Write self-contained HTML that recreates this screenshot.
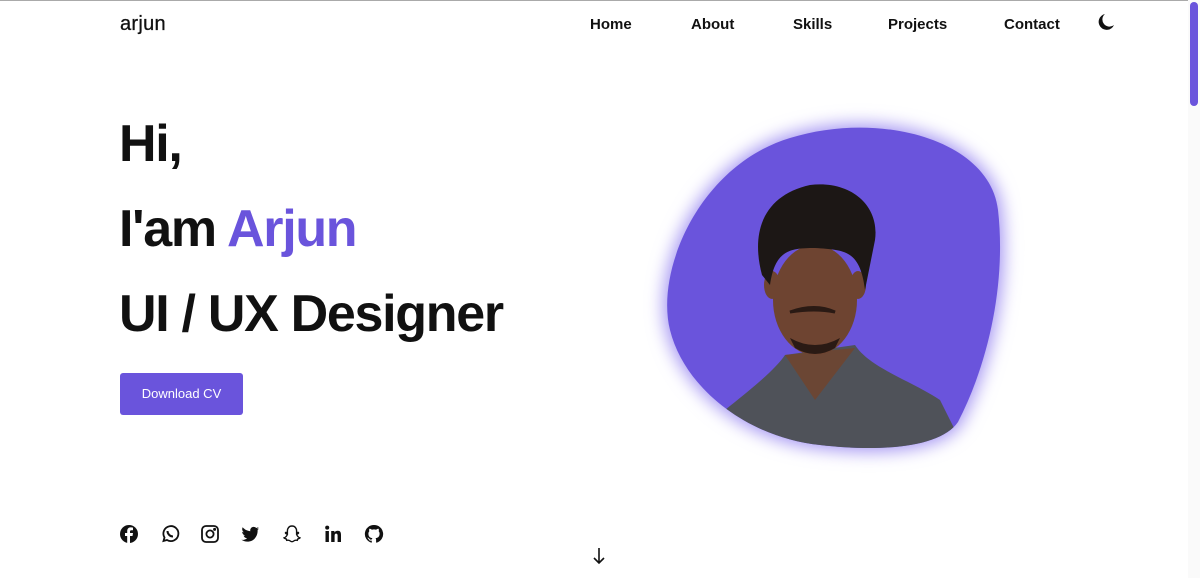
<!DOCTYPE html>
<html><head><meta charset="utf-8"><style>
*{margin:0;padding:0;box-sizing:border-box}
body{width:1200px;height:578px;overflow:hidden;background:#fff;font-family:"Liberation Sans",sans-serif;color:#111;position:relative}
.top{position:absolute;left:0;top:0;width:1200px;height:1px;background:#aaa}
.logo{position:absolute;left:120px;top:13px;font-size:20px;letter-spacing:.3px;-webkit-text-stroke:.3px #111}
.nav a{position:absolute;top:16px;font-size:15px;font-weight:bold;color:#111;text-decoration:none}
h1{position:absolute;left:119px;font-size:52px;font-weight:bold;letter-spacing:-1.3px;white-space:nowrap}
.btn{position:absolute;left:120px;top:373px;width:123px;height:42px;background:#6a54dc;color:#fff;border-radius:3px;font-size:13px;text-align:center;line-height:42px}
.sb{position:absolute;right:0;top:0;width:12px;height:578px;background:#fafafa}
.thumb{position:absolute;right:2px;top:2px;width:8px;height:104px;background:#6a54dc;border-radius:4px}
.soc svg{position:absolute;top:524px;width:20px;height:20px}
</style></head><body>
<div class="top"></div>
<div class="logo">arjun</div>
<div class="nav">
<a style="left:590px">Home</a><a style="left:691px">About</a><a style="left:793px">Skills</a><a style="left:888px">Projects</a><a style="left:1004px">Contact</a>
</div>
<svg style="position:absolute;left:1096px;top:12px" width="20" height="20" viewBox="0 0 20 20"><path d="M9 2A8 8 0 1 0 18 13A7 7 0 0 1 9 2Z" fill="#111"/></svg>
<h1 style="top:114px">Hi,</h1>
<h1 style="top:199px">I'am <span style="color:#6a54dc">Arjun</span></h1>
<h1 style="top:284px">UI / UX Designer</h1>
<div class="btn">Download CV</div>

<svg style="position:absolute;left:640px;top:100px" width="400" height="380" viewBox="0 0 400 380">
<defs><filter id="f" x="-20%" y="-20%" width="140%" height="140%"><feGaussianBlur stdDeviation="8"/></filter>
<clipPath id="c"><path d="M150 38C240 10 350 40 358 110C366 180 350 260 318 322C300 348 240 352 180 345C110 338 45 290 30 230C15 170 60 65 150 38Z"/></clipPath></defs>
<path d="M150 38C240 10 350 40 358 110C366 180 350 260 318 322C300 348 240 352 180 345C110 338 45 290 30 230C15 170 60 65 150 38Z" fill="#9c8bf0" stroke="#b5a9f5" stroke-width="10" filter="url(#f)"/>
<path d="M150 38C240 10 350 40 358 110C366 180 350 260 318 322C300 348 240 352 180 345C110 338 45 290 30 230C15 170 60 65 150 38Z" fill="#6a54dc"/>
<g clip-path="url(#c)">
<path d="M85 310C110 290 135 270 145 255L215 245C230 268 270 280 300 300L320 340L320 380L85 380Z" fill="#4f5259"/>
<path d="M145 255L175 300L215 248Z" fill="#6b4634"/>
<ellipse cx="175" cy="200" rx="42" ry="55" fill="#6e4431"/>
<ellipse cx="132" cy="185" rx="8" ry="14" fill="#6e4431"/>
<ellipse cx="218" cy="185" rx="8" ry="14" fill="#6e4431"/>
<path d="M122 175C110 130 125 95 170 85C210 80 240 105 235 140L225 190C220 150 205 150 175 148C150 148 135 150 130 185Z" fill="#1c1715"/>
<path d="M150 212Q175 203 195 212Q175 208 150 212Z" fill="#2a1a14" stroke="#2a1a14" stroke-width="3"/>
<path d="M150 238Q175 252 200 238L195 248Q175 260 155 248Z" fill="#2a1a14"/>
</g>
</svg>

<div class="soc">
<svg style="left:119px" viewBox="0 0 20 20"><circle cx="10" cy="10" r="9" fill="#111"/><path d="M11 19V12H13.5L14 9H11V7.5C11 6.7 11.3 6.2 12.3 6.2H14V3.6C13.6 3.5 12.7 3.4 11.8 3.4C9.6 3.4 8.2 4.7 8.2 7V9H6V12H8.2V19Z" fill="#fff"/></svg>
<svg style="left:160px" viewBox="0 0 20 20" fill="none" stroke="#111" stroke-width="1.8"><path d="M3.5 17L4.5 13.5A7.5 7.5 0 1 1 7 16Z"/><path d="M7.5 7C7.5 10 10 12.5 13 12.5" stroke-width="2"/></svg>
<svg style="left:200px" viewBox="0 0 20 20" fill="none" stroke="#111" stroke-width="1.8"><rect x="2" y="2" width="16" height="16" rx="4"/><circle cx="10" cy="10" r="3.6"/><circle cx="14.6" cy="5.4" r=".6" fill="#111"/></svg>
<svg style="left:240px" viewBox="0 0 20 20"><path d="M19 4.5C18.3 4.8 17.6 5 16.9 5.1C17.6 4.6 18.2 4 18.5 3.1C17.8 3.5 17 3.8 16.2 4C14.9 2.6 12.7 2.5 11.3 3.8C10.4 4.7 10 6 10.3 7.2C7.3 7 4.6 5.6 2.7 3.3C1.7 5 2.2 7.2 3.9 8.3C3.3 8.3 2.7 8.1 2.2 7.8C2.2 9.6 3.5 11.2 5.2 11.5C4.7 11.7 4.1 11.7 3.6 11.6C4.1 13.1 5.5 14.2 7.1 14.2C5.5 15.5 3.4 16.1 1.4 15.8C3.2 17 5.2 17.6 7.3 17.6C14.6 17.6 18 11.3 17.6 5.9C18.2 5.5 18.7 5 19 4.5Z" fill="#111"/></svg>
<svg style="left:282px" viewBox="0 0 20 20" fill="none" stroke="#111" stroke-width="1.4"><path d="M10 2C13 2 14.6 4.3 14.6 7V8.8L16.2 8.4C16.7 8.6 16.7 9.2 16.2 9.5L14.6 10.3C15.2 12 16.5 13.4 18 13.9C17.6 14.6 16.5 14.6 15.8 14.9L15.3 16.3C14.2 16.1 12.9 16 11.9 16.9C10.6 18 9.4 18 8.1 16.9C7.1 16 5.8 16.1 4.7 16.3L4.2 14.9C3.5 14.6 2.4 14.6 2 13.9C3.5 13.4 4.8 12 5.4 10.3L3.8 9.5C3.3 9.2 3.3 8.6 3.8 8.4L5.4 8.8V7C5.4 4.3 7 2 10 2Z"/></svg>
<svg style="left:323px" viewBox="0 0 20 20" fill="#111"><rect x="2.5" y="7" width="3.4" height="11"/><circle cx="4.2" cy="3.6" r="2"/><path d="M8.2 7H11.4V8.6C12 7.5 13.3 6.8 14.8 6.8C17.3 6.8 18 8.5 18 11V18H14.6V11.8C14.6 10.5 14.3 9.6 13.1 9.6C11.9 9.6 11.6 10.6 11.6 11.8V18H8.2Z"/></svg>
<svg style="left:364px" viewBox="0 0 20 20"><path d="M10 1A9 9 0 0 0 7.2 18.6C7.6 18.7 7.8 18.4 7.8 18.2V16.6C5.3 17.1 4.8 15.5 4.8 15.5C4.4 14.5 3.8 14.2 3.8 14.2C3 13.6 3.9 13.6 3.9 13.6C4.8 13.7 5.3 14.6 5.3 14.6C6.1 16 7.4 15.6 7.9 15.3C8 14.7 8.2 14.3 8.5 14.1C6.5 13.9 4.4 13.1 4.4 9.6C4.4 8.6 4.8 7.8 5.3 7.2C5.2 7 4.9 6 5.4 4.8C5.4 4.8 6.2 4.6 7.9 5.7A8.6 8.6 0 0 1 12.1 5.7C13.8 4.6 14.6 4.8 14.6 4.8C15.1 6 14.8 7 14.7 7.2C15.2 7.8 15.6 8.6 15.6 9.6C15.6 13.1 13.5 13.9 11.5 14.1C11.8 14.4 12.1 14.9 12.1 15.7V18.2C12.1 18.4 12.3 18.7 12.8 18.6A9 9 0 0 0 10 1Z" fill="#111"/></svg>
</div>
<svg style="position:absolute;left:592px;top:547px" width="14" height="18" viewBox="0 0 14 18" fill="none" stroke="#111" stroke-width="1.6"><path d="M7 1V16M2 11L7 16L12 11"/></svg>
<div class="sb"><div class="thumb"></div></div>
</body></html>
